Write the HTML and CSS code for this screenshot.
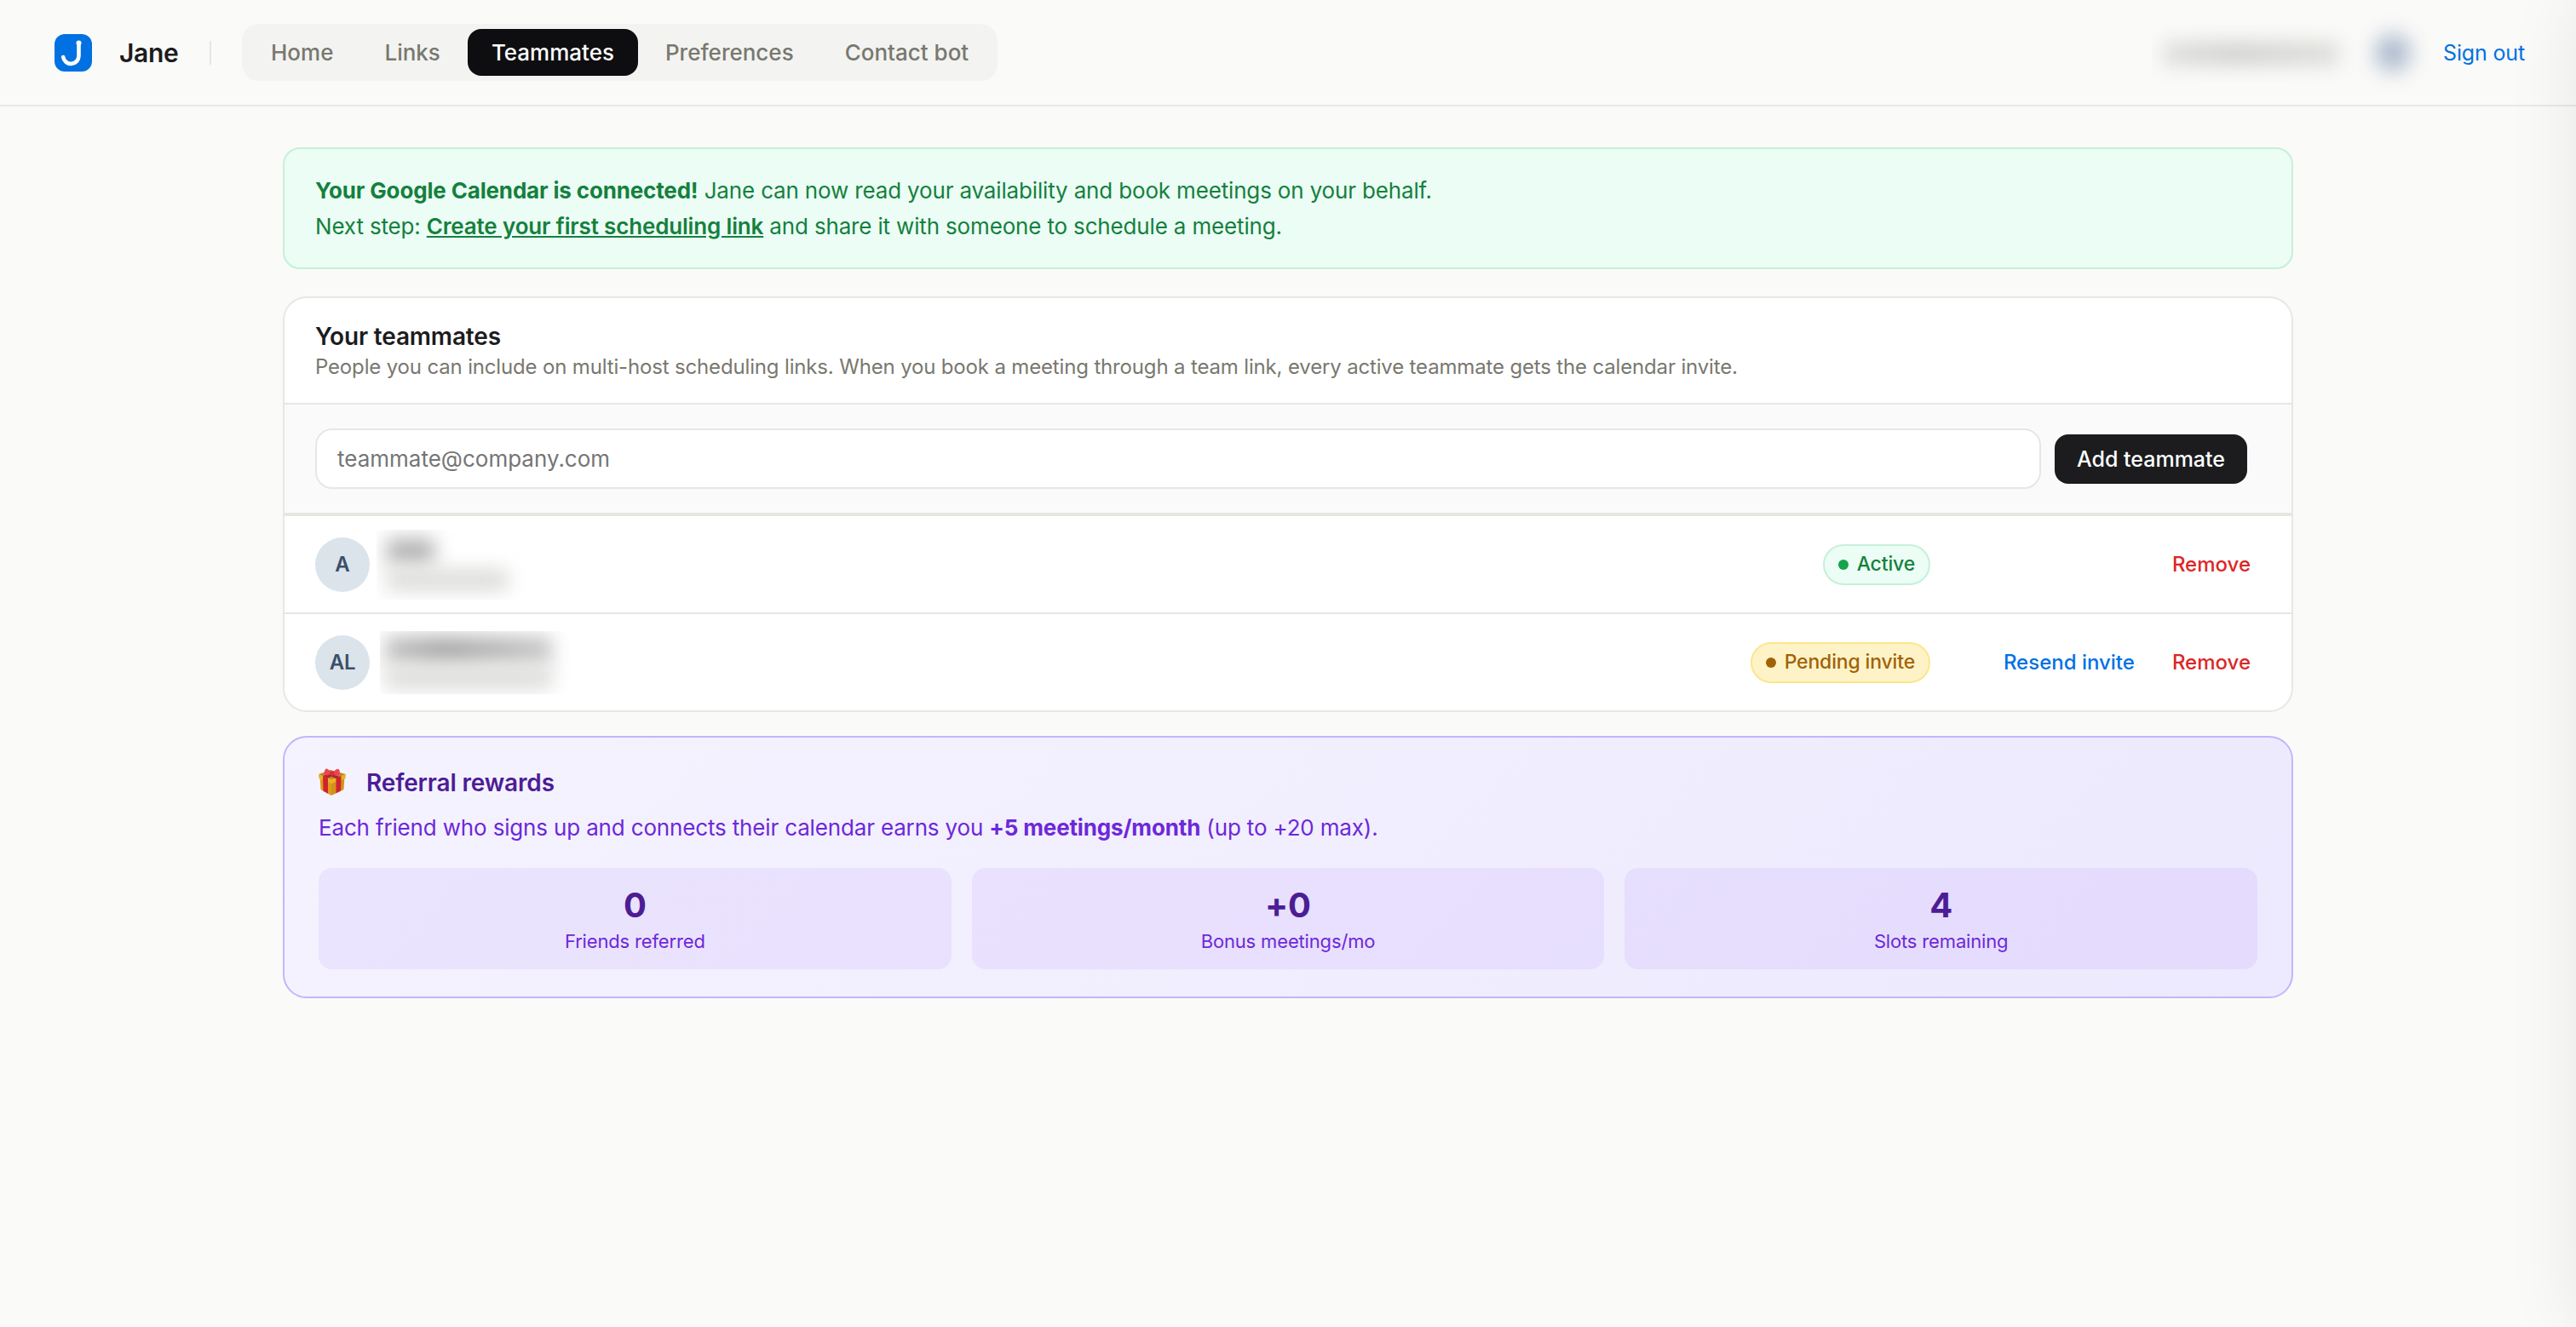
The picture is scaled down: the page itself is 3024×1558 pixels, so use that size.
FILE: index.html
```html
<!DOCTYPE html>
<html lang="en">
<head>
    <meta charset="UTF-8">
    <meta name="viewport" content="width=device-width, initial-scale=1.0">
    <title>Jane - Teammates</title>
    <link rel="stylesheet" href="styles.css">
</head>
<body>
    <header class="topbar">
        <svg class="logo" viewBox="0 0 44 44">
            <rect width="44" height="44" rx="12" fill="#0071e3"/>
            <path d="M28.5 10.5V25.6a9.2 9.2 0 0 1-18.300 1.400" fill="none" stroke="#fff" stroke-width="4.600" stroke-linecap="round"/>
            <circle cx="28.500" cy="10.500" r="3" fill="#fff"/>
        </svg>
        <span class="brand">Jane</span>
        <span class="divider"></span>
        <nav class="nav">
            <a class="nav-link">Home</a>
            <a class="nav-link">Links</a>
            <a class="nav-link active">Teammates</a>
            <a class="nav-link">Preferences</a>
            <a class="nav-link">Contact bot</a>
        </nav>
        <div class="account">
            <div class="hidden-email"><i></i></div>
            <div class="hidden-avatar"><i></i></div>
            <a class="signout">Sign out</a>
        </div>
    </header>

    <main class="page">
        <div class="banner">
            <strong>Your Google Calendar is connected!</strong> Jane can now read your availability and book meetings on your behalf.<br>
            Next step: <a class="banner-link">Create your first scheduling link</a> and share it with someone to schedule a meeting.
        </div>

        <section class="card">
            <div class="card-header">
                <h2>Your teammates</h2>
                <p>People you can include on multi-host scheduling links. When you book a meeting through a team link, every active teammate gets the calendar invite.</p>
            </div>
            <form class="add-form">
                <input type="email" placeholder="teammate@company.com">
                <button type="button">Add teammate</button>
            </form>
            <div class="row">
                <div class="avatar">A</div>
                <div class="person person-one"><i></i><i></i></div>
                <span class="badge badge-active">Active</span>
                <div class="actions">
                    <a class="remove">Remove</a>
                </div>
            </div>
            <div class="row">
                <div class="avatar">AL</div>
                <div class="person person-two"><i></i><i></i></div>
                <span class="badge badge-pending">Pending invite</span>
                <div class="actions">
                    <a class="resend">Resend invite</a>
                    <a class="remove">Remove</a>
                </div>
            </div>
        </section>

        <section class="referral">
            <div class="referral-title">
                <svg class="gift" viewBox="0 0 32 32">
                    <path d="M1.500 10L15 15.500V32L2.500 25z" fill="#dd9c1a"/>
                    <path d="M30.500 10L15 15.500V32l14.500-7z" fill="#d3921a"/>
                    <path d="M0 7L14 2l18 5-17 8z" fill="#b98a22"/>
                    <path d="M0 7l15 6v5L.500 12zM32 7l-17 6v5l16.500-6z" fill="#eab02a"/>
                    <path d="M5 9l6 2.500V29.800l-5.500-3zM26.500 9l-6 2.500v17.800l5.500-2.700z" fill="#cf2230"/>
                    <path d="M5 9l8-3 12 4-4.500 2L15 9.500l-4 2z" fill="#b3222c"/>
                    <path d="M15 5C12 1 9-.5 8 1S6 6 7 7.500 12 8 15 7zM17 5c3-4 6-5 7-3.500s1.500 5 .5 6.500-5 .5-7.500-1z" fill="#ee4450"/>
                    <rect x="13" y="3.500" width="5.500" height="5" rx="2" fill="#d5303c"/>
                </svg>
                <h2>Referral rewards</h2>
            </div>
            <p class="referral-text">Each friend who signs up and connects their calendar earns you <strong>+5 meetings/month</strong> (up to +20 max).</p>
            <div class="stats">
                <div class="stat"><b>0</b><span>Friends referred</span></div>
                <div class="stat"><b>+0</b><span>Bonus meetings/mo</span></div>
                <div class="stat"><b>4</b><span>Slots remaining</span></div>
            </div>
        </section>
    </main>
    <aside class="drawer"></aside>
</body>
</html>
```
FILE: styles.css
```css
* {
    box-sizing: border-box;
}

body {
    margin: 0;
    min-height: 100vh;
    background: #fafaf8;
    color: #1c1c1e;
    font-family: Inter, "Liberation Sans", sans-serif;
    font-size: 26px;
    line-height: 1.6;
    letter-spacing: -0.16px;
}

h2, p {
    margin: 0;
}

/* Top bar */
.topbar {
    display: flex;
    align-items: center;
    height: 125px;
    padding: 0 60px 0 64px;
    border-bottom: 2px solid #e8e8e5;
}

.logo {
    width: 44px;
    height: 44px;
}

.brand {
    margin-left: 32px;
    width: 106px;
    font-size: 30px;
    font-weight: 600;
    letter-spacing: -0.3px;
}

.divider {
    width: 2px;
    height: 28px;
    background: #e6e6e3;
}

.nav {
    display: flex;
    gap: 4px;
    margin-left: 36px;
    padding: 6px;
    background: #f3f3f1;
    border-radius: 20px;
    letter-spacing: 0;
}

.nav-link {
    padding: 0 28px;
    line-height: 55px;
    border-radius: 16px;
    color: #78786f;
    font-weight: 500;
}

.nav-link.active {
    background: #0e0e10;
    color: #fff;
}

.account {
    display: flex;
    align-items: center;
    margin-left: auto;
}

.signout {
    color: #0071e3;
    font-size: 25px;
}

/* Blurred private details */
.hidden-email, .hidden-avatar, .person {
    overflow: hidden;
}

.hidden-email i, .hidden-avatar i, .person i {
    display: block;
}

.hidden-email {
    width: 240px;
    height: 72px;
    padding: 23px 20px 21px 14px;
}

.hidden-email i {
    height: 28px;
    background: linear-gradient(90deg, #dededc, #d2d2d0 40%, #dededc);
    filter: blur(11px);
}

.hidden-avatar {
    width: 86px;
    height: 90px;
    margin-right: 16px;
    padding: 23px 22px;
}

.hidden-avatar i {
    height: 44px;
    border-radius: 50%;
    background: #acbacd;
    filter: blur(12px);
}

/* Page */
.page {
    width: 2360px;
    margin: 48px auto 0;
}

.banner {
    padding: 28px 36px;
    margin-bottom: 32px;
    background: #ebfdf5;
    border: 2px solid #c6f0d9;
    border-radius: 20px;
    color: #15803d;
}

.banner-link {
    font-weight: 600;
    text-decoration: underline;
}

strong {
    font-weight: 700;
}

.card {
    overflow: hidden;
    background: #fff;
    border: 2px solid #e7e7e4;
    border-radius: 28px;
}

.card-header {
    height: 125px;
    padding: 28px 36px;
    border-bottom: 2px solid #e7e7e4;
}

.card-header h2 {
    font-size: 28px;
    font-weight: 600;
    line-height: 34px;
}

.card-header p {
    margin-top: 4px;
    color: #78786f;
    font-size: 24px;
    line-height: 30px;
}

.add-form {
    display: flex;
    align-items: center;
    gap: 16px;
    height: 131px;
    padding: 0 52px 0 36px;
    background: #fafafa;
    border-bottom: 4px solid #e7e7e2;
}

.add-form input {
    flex: 1;
    height: 71px;
    padding: 0 24px;
    background: #fff;
    border: 2px solid #e7e7e2;
    border-radius: 20px;
    font: inherit;
}

.add-form input::placeholder {
    color: #757575;
}

.add-form button {
    width: 226px;
    height: 58px;
    padding: 0;
    border: none;
    border-radius: 16px;
    background: #1c1c1e;
    color: #fff;
    font: 500 25px Inter, sans-serif;
}

.row {
    display: flex;
    align-items: center;
    height: 115px;
    padding: 0 48px 0 36px;
    border-bottom: 2px solid #e7e7e2;
    font-size: 24px;
    font-weight: 500;
}

.row:last-child {
    height: 113px;
    border-bottom: none;
}

.avatar {
    width: 64px;
    height: 64px;
    border-radius: 50%;
    background: #dbe3eb;
    color: #3a5068;
    font-weight: 600;
    line-height: 64px;
    text-align: center;
}

.person {
    margin-right: auto;
}

.person-one {
    width: 180px;
    height: 82px;
    margin-left: 8px;
    padding: 10px 12px;
}

.person-two {
    width: 224px;
    height: 74px;
    margin-left: 12px;
    padding: 6px 22px 6px 6px;
}

.person i {
    height: 26px;
    filter: blur(11px);
}

.person-one i:first-child {
    width: 56px;
    height: 30px;
    background: #b4b4b4;
}

.person-one i:last-child {
    width: 142px;
    margin-top: 6px;
    background: #dcdcda;
}

.person-two i:first-child {
    height: 32px;
    background: linear-gradient(90deg, #c4c4c4, #a8a8a8 35%, #c8c8c8);
}

.person-two i:last-child {
    margin-top: 4px;
    background: #dcdcda;
}

.badge {
    display: flex;
    align-items: center;
    height: 48px;
    padding: 0 16px;
    border: 2px solid;
    border-radius: 24px;
    font-size: 23px;
}

.badge::before {
    content: "";
    width: 12px;
    height: 12px;
    margin-right: 10px;
    border-radius: 50%;
}

.badge-active {
    background: #ebfdf5;
    border-color: #c6f0d9;
    color: #15803d;
}

.badge-active::before {
    background: #16a34a;
}

.badge-pending {
    background: #fef3c7;
    border-color: #fde68a;
    color: #a16207;
}

.badge-pending::before {
    background: #a16207;
}

.actions {
    display: flex;
    justify-content: flex-end;
    gap: 44px;
    width: 376px;
    padding-top: 1px;
    letter-spacing: 0;
}

.resend {
    color: #0071e3;
}

.remove {
    color: #dc2626;
}

/* Referral */
.referral {
    height: 308px;
    margin-top: 28px;
    padding: 28px 40px;
    background: linear-gradient(135deg, #f5f3ff, #ede9fe);
    border: 2px solid #c4b5fd;
    border-radius: 28px;
}

.referral-title {
    display: flex;
    align-items: center;
    height: 50px;
}

.gift {
    width: 32px;
    height: 32px;
    margin: -2px 24px 0 0;
    overflow: visible;
}

.referral h2 {
    color: #4c1d95;
    font-size: 28px;
    font-weight: 600;
}

.referral-text {
    margin: 7px 0 26px;
    color: #6d28d9;
    line-height: 42px;
}

.stats {
    display: grid;
    grid-template-columns: repeat(3, 1fr);
    gap: 24px;
}

.stat {
    height: 119px;
    padding-top: 20px;
    border-radius: 16px;
    background: rgba(124, 58, 237, 0.08);
    color: #6d28d9;
    text-align: center;
}

.stat b {
    display: block;
    color: #4c1d95;
    font-size: 40px;
    line-height: 48px;
}

.stat span {
    display: block;
    font-size: 22px;
    line-height: 36px;
}

/* Closed side drawer, only its shadow reaches the page */
.drawer {
    position: fixed;
    top: 0;
    left: 100%;
    width: 600px;
    height: 100%;
    box-shadow: 0 0 80px rgba(0, 0, 0, 0.08);
}
```
